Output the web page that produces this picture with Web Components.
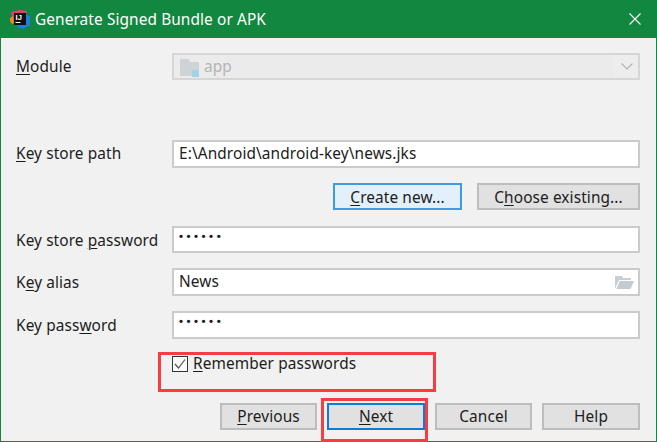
<!DOCTYPE html>
<html>
<head>
<meta charset="utf-8">
<title>Generate Signed Bundle or APK</title>
<style>
    html, body { margin: 0; padding: 0; width: 657px; height: 442px; overflow: hidden; }
    body { font: 15.4px "Noto Sans", "Open Sans", sans-serif; color: #1c1c1c; letter-spacing: .1px; }
    u { text-underline-offset: 2px; text-decoration-thickness: 1px; }
</style>
</head>
<body>
<signed-dialog>
    <title-bar slot="title">Generate Signed Bundle or APK</title-bar>

    <form-row style="--row-h: 27px; margin-bottom: 60px">
        <span slot="label"><u>M</u>odule</span>
        <combo-box value="app"></combo-box>
    </form-row>
    <form-row style="--row-h: 28px; --label-y: -1px; margin-bottom: 15px">
        <span slot="label"><u>K</u>ey store path</span>
        <text-field value="E:\Android\android-key\news.jks"></text-field>
    </form-row>
    <button-row style="--text-y: 1px; margin-bottom: 16px; gap: 15px">
        <push-button style="width: 129px" state="hover"><u>C</u>reate new...</push-button>
        <push-button style="width: 163px">C<u>h</u>oose existing...</push-button>
    </button-row>
    <form-row style="--row-h: 27px; --label-y: 1px; margin-bottom: 15px">
        <span slot="label">Key store <u>p</u>assword</span>
        <text-field type="password" value="••••••"></text-field>
    </form-row>
    <form-row style="--row-h: 28px; margin-bottom: 15px">
        <span slot="label">K<u>e</u>y alias</span>
        <text-field value="News" browse></text-field>
    </form-row>
    <form-row style="--row-h: 28px; margin-bottom: 17px">
        <span slot="label">Key pass<u>w</u>ord</span>
        <text-field type="password" value="••••••"></text-field>
    </form-row>
    <form-row style="--row-h: 16px; margin-bottom: 31px">
        <check-box checked><u>R</u>emember passwords</check-box>
    </form-row>
    <button-row style="gap: 10px">
        <push-button style="width: 97px"><u>P</u>revious</push-button>
        <push-button style="width: 98px" state="default"><u>N</u>ext</push-button>
        <push-button style="width: 97px">Cancel</push-button>
        <push-button style="width: 98px">Help</push-button>
    </button-row>

    <mark-box style="left: 158px; top: 352px; width: 278px; height: 40px"></mark-box>
    <mark-box style="left: 321px; top: 398px; width: 107px; height: 44px"></mark-box>
</signed-dialog>

<script>
'use strict'

function define(name, css, html, setup) {
    const template = document.createElement('template')
    template.innerHTML = `<style>${css}</style>${html}`

    customElements.define(name, class extends HTMLElement {
        connectedCallback() {
            if (this.shadowRoot) return
            this.attachShadow({ mode: 'open' })
            this.shadowRoot.appendChild(template.content.cloneNode(true))
            if (setup) setup(this, this.shadowRoot)
        }
    })
}

define('signed-dialog', `
    :host { display: flex; flex-direction: column; box-sizing: border-box; position: relative;
            width: 657px; height: 442px; background: #f1f1f1;
            border: solid #12873f; border-width: 0 1px 1px 1px; }
    .form { display: flex; flex-direction: column; padding: 15px 16px 0 15px; }
`, `<slot name="title"></slot><div class="form"><slot></slot></div>`)

define('title-bar', `
    :host { display: flex; align-items: center; height: 38px; flex: none; padding: 0 0 0 9px;
            background: #12873f; color: #fff; font-size: 15.4px; }
    svg { flex: none; margin-right: 4px; }
    .text { flex: 1; }
    .close { flex: none; margin-right: 15px; }
    text { font: bold 7.500px "Liberation Sans", sans-serif; fill: #fff; }
`, `
    <svg width="21" height="21" viewBox="0 0 21 21">
        <polygon points="1,3 10,1 17,2 15,9 3,11" fill="#ee3a6e"/>
        <polygon points="0,9 3,7 4,14 2,15 0,12" fill="#f08a1d"/>
        <polygon points="13,3 20,8 20,16 13,20 7,18" fill="#1d7fe0"/>
        <rect x="4" y="4" width="12" height="12" fill="#111"/>
        <text x="5.500" y="11">IJ</text>
        <rect x="5.500" y="13" width="5" height="1" fill="#fff"/>
    </svg>
    <span class="text"><slot></slot></span>
    <svg class="close" width="12" height="12" viewBox="0 0 12 12">
        <path d="M.5.5l11 11M11.500.5l-11 11" stroke="#fff" stroke-width="1.100" fill="none"/>
    </svg>
`)

define('form-row', `
    :host { display: grid; grid-template-columns: 156px 1fr; align-items: center;
            height: var(--row-h, 28px); }
    .label { white-space: nowrap; position: relative; top: var(--label-y, 0); }
    .main { display: flex; height: 100%; align-items: stretch; min-width: 0; }
`, `<div class="label"><slot name="label"></slot></div><div class="main"><slot></slot></div>`)

define('button-row', `
    :host { display: flex; justify-content: flex-end; height: 27px; flex: none; }
`, `<slot></slot>`)

define('text-field', `
    :host { display: flex; flex: 1; align-items: center; box-sizing: border-box; min-width: 0;
            background: #fff; border: 2px solid #cbcbcb; padding: 0 5px; }
    .value { flex: 1; white-space: nowrap; position: relative; top: -1px; }
    :host([type=password]) .value { font: bold 11.500px "Liberation Sans", sans-serif;
            letter-spacing: 3.500px; top: -4px; }
    svg { flex: none; display: none; margin-right: -1px; }
    :host([browse]) svg { display: block; }
`, `
    <span class="value"></span>
    <svg width="19" height="13" viewBox="0 0 19 13">
        <path d="M0 13V0h7l1 2h8v2H4z" fill="#c9d0d5"/>
        <path d="M4.800 5H19l-3.500 8H1.500z" fill="#c3cad0"/>
    </svg>
`, (el, root) => {
    root.querySelector('.value').textContent = el.getAttribute('value')
})

define('combo-box', `
    :host { display: flex; flex: 1; align-items: center; box-sizing: border-box;
            background: #ebebeb; border: 2px solid #d6d6d6; color: #b4b4b4; padding-left: 6px; }
    .folder { flex: none; margin: 3px 5px 0 0; }
    .value { flex: 1; }
    .arrow { flex: none; width: 24px; align-self: stretch; box-sizing: border-box; display: flex;
             align-items: center; justify-content: flex-end; padding-right: 5px; background: #ededed; }
`, `
    <svg class="folder" width="19" height="18" viewBox="0 0 19 18">
        <path d="M0 0h8l3 3h8v8h-7v6H0z" fill="#ced3d6"/>
        <rect x="12" y="11" width="7" height="7" fill="#9fd3e8"/>
    </svg>
    <span class="value"></span>
    <span class="arrow">
        <svg width="12" height="7" viewBox="0 0 12 7">
            <path d="M.5.5L6 6 11.500.5" stroke="#b0b0b0" stroke-width="1.100" fill="none"/>
        </svg>
    </span>
`, (el, root) => {
    root.querySelector('.value').textContent = el.getAttribute('value')
})

define('push-button', `
    :host { display: flex; align-items: center; justify-content: center; box-sizing: border-box;
            height: 27px; flex: none; background: #e1e1e1; border: 2px solid #bdbdbd; white-space: nowrap; }
    :host([state=hover]) { background: #e3f0fa; border-color: #3d9be6; }
    :host([state=default]) { border-color: #0f7bd8; }
    span { position: relative; top: var(--text-y, 0); }
`, `<span><slot></slot></span>`)

define('check-box', `
    :host { display: flex; align-items: center; height: 16px; white-space: nowrap; grid-column: 2; }
    svg { flex: none; margin-right: 5px; }
    span { position: relative; top: -1px; }
`, `
    <svg width="16" height="16" viewBox="0 0 16 16">
        <rect x=".5" y=".5" width="15" height="15" fill="#f8f8f8" stroke="#333"/>
        <path d="M3 8l3.500 4L13 3.500" stroke="#555" stroke-width="1.200" fill="none"/>
    </svg>
    <span><slot></slot></span>
`)

// red annotation rectangles lying over the dialog
define('mark-box', `
    :host { display: block; position: absolute; box-sizing: border-box; margin: 0 0 0 -1px;
            border: 3px solid #f93c40; pointer-events: none; }
`, ``)
</script>
</body>
</html>
